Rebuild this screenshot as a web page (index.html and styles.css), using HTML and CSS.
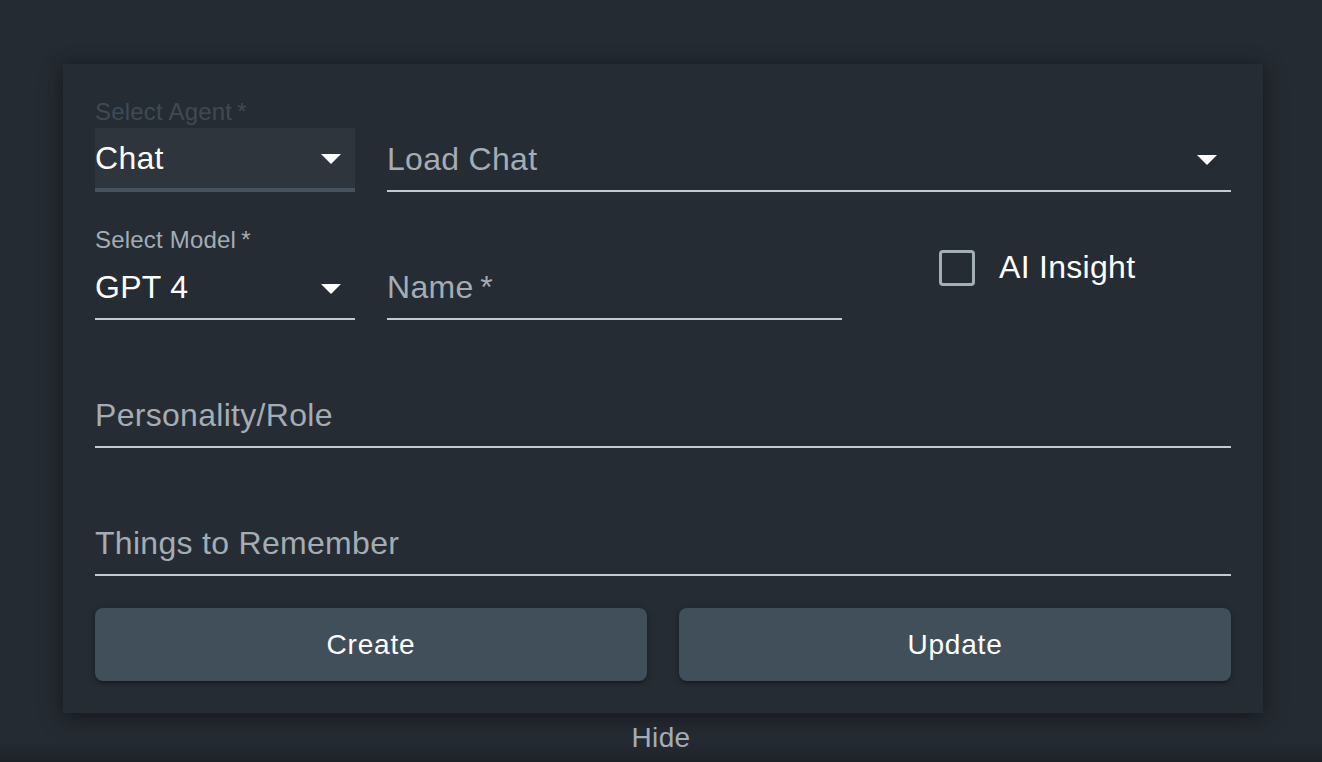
FILE: index.html
```html
<!DOCTYPE html>
<html lang="en">
<head>
<meta charset="utf-8">
<title>Agent</title>
<link rel="stylesheet" href="styles.css">
</head>
<body>
<div class="page">
  <div class="card">
    <div class="row row-top">
      <div class="field">
        <div class="label label-dim">Select Agent&thinsp;*</div>
        <div class="control filled">
          <span class="value">Chat</span>
          <span class="arrow"></span>
        </div>
      </div>
      <div class="field">
        <div class="control standard">
          <span class="placeholder">Load Chat</span>
          <span class="arrow"></span>
        </div>
      </div>
    </div>

    <div class="row row-mid">
      <div class="field">
        <div class="label">Select Model&thinsp;*</div>
        <div class="control standard">
          <span class="value">GPT 4</span>
          <span class="arrow"></span>
        </div>
      </div>
      <div class="field">
        <div class="control standard">
          <span class="placeholder">Name&thinsp;*</span>
        </div>
      </div>
      <label class="check">
        <span class="box"></span>
        <span class="check-text">AI Insight</span>
      </label>
    </div>

    <div class="field text-field">
      <div class="control standard">
        <span class="placeholder">Personality/Role</span>
      </div>
    </div>

    <div class="field text-field">
      <div class="control standard">
        <span class="placeholder">Things to Remember</span>
      </div>
    </div>

    <div class="buttons">
      <button class="btn">Create</button>
      <button class="btn">Update</button>
    </div>
  </div>
  <div class="footer">Hide</div>
</div>
</body>
</html>
```

FILE: styles.css
```css
html, body {
  margin: 0;
  padding: 0;
}
body {
  background: #252b32;
  font-family: "Liberation Sans", Arial, Helvetica, sans-serif;
  width: 1322px;
  height: 762px;
  overflow: hidden;
}
.page {
  height: 762px;
  display: flex;
  flex-direction: column;
  background: linear-gradient(to bottom, rgba(0,0,0,0) 0, rgba(0,0,0,0) 742px, rgba(0,0,0,0.22) 762px);
}
.card {
  width: 1200px;
  box-sizing: border-box;
  margin: 64px 0 0 63px;
  padding: 32px 32px 32px;
  background: #262c33;
  box-shadow: 0 6px 24px rgba(0,0,0,0.28), 0 0 14px rgba(0,0,0,0.22);
  display: flex;
  flex-direction: column;
  gap: 32px;
}
.row {
  display: grid;
  column-gap: 32px;
  align-items: end;
}
.row-top {
  grid-template-columns: 260px 1fr;
}
.row-mid {
  grid-template-columns: 260px 455px 1fr;
}
.field {
  display: flex;
  flex-direction: column;
}
.label {
  height: 32px;
  line-height: 32px;
  font-size: 24px;
  letter-spacing: 0.2px;
  color: #a3adb4;
  white-space: nowrap;
}
.label-dim {
  color: #404a53;
}
.control {
  height: 64px;
  box-sizing: border-box;
  display: flex;
  align-items: center;
  position: relative;
  font-size: 32px;
  letter-spacing: 0.3px;
}
.filled {
  background: #2e353c;
  border-bottom: 4px solid #46535e;
}
.standard {
  border-bottom: 2px solid #c6cacc;
}
.value {
  color: #ffffff;
}
.placeholder {
  color: #a3adb4;
}
.arrow {
  position: absolute;
  right: 14px;
  top: 50%;
  margin-top: -4px;
  width: 0;
  height: 0;
  border-left: 10px solid transparent;
  border-right: 10px solid transparent;
  border-top: 10px solid #ffffff;
}
.row-mid .field:first-child .arrow {
  margin-top: -3px;
}
.check {
  align-self: start;
  margin-top: 25px;
  padding-left: 65px;
  display: flex;
  align-items: center;
  gap: 24px;
}
.box {
  width: 36px;
  height: 36px;
  box-sizing: border-box;
  border: 3px solid #a3aeb5;
  border-radius: 4px;
}
.check-text {
  color: #ffffff;
  font-size: 32px;
  letter-spacing: 0.3px;
}
.text-field {
  padding-top: 32px;
}
.buttons {
  display: grid;
  grid-template-columns: 1fr 1fr;
  column-gap: 32px;
}
.btn {
  height: 73px;
  border: none;
  border-radius: 8px;
  background: #414f5a;
  color: #ffffff;
  font-family: "Liberation Sans", Arial, Helvetica, sans-serif;
  font-size: 28px;
  letter-spacing: 0.8px;
  box-shadow: 0 3px 3px -2px rgba(0,0,0,0.3), 0 2px 4px rgba(0,0,0,0.2), 0 1px 8px rgba(0,0,0,0.15);
  padding: 0;
}
.footer {
  height: 50px;
  line-height: 50px;
  text-align: center;
  font-size: 28px;
  letter-spacing: 0.3px;
  color: #a3adb4;
}
```
